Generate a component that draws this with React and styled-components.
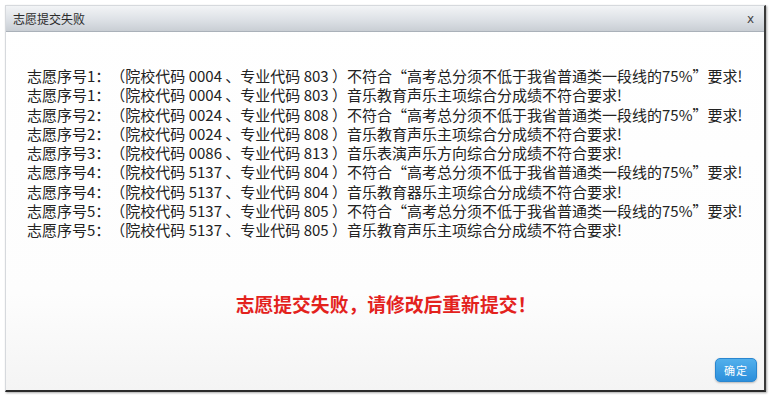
import styled, { createGlobalStyle } from "styled-components";

const GlobalStyle = createGlobalStyle`
  html, body {
    margin: 0;
    padding: 0;
    background: #ffffff;
  }
  body {
    font-family: "Noto Sans CJK SC", "Noto Sans", sans-serif;
    text-spacing-trim: space-all;
  }
`;

const Page = styled.div`
  width: 773px;
  height: 400px;
  padding: 5px 0 0 5px;
  box-sizing: border-box;
`;

const Dialog = styled.div`
  width: 761px;
  height: 387px;
  box-sizing: border-box;
  display: flex;
  flex-direction: column;
  border: 1px solid #d6d9dd;
  border-right: 2px solid #3a3a3a;
  border-bottom: 2px solid #2a2a2a;
  background: linear-gradient(to bottom, #ffffff 0%, #fdfdfd 75%, #f4f4f4 100%);
  box-shadow: 1px 1px 2px rgba(0, 0, 0, 0.35);
`;

const Header = styled.div`
  height: 25px;
  flex: none;
  display: flex;
  align-items: center;
  justify-content: space-between;
  padding: 0 10px 0 7px;
  background: linear-gradient(to bottom, #f2f4f6 0%, #dde1e6 55%, #c9ced4 100%);
  border-bottom: 1px solid #aab1b9;
`;

const Title = styled.span`
  font-size: 12px;
  color: #2a2a2a;
`;

const Close = styled.span`
  font-size: 12px;
  color: #444;
  font-family: "DejaVu Sans", sans-serif;
  line-height: 1;
`;

const Body = styled.div`
  flex: 1;
  display: flex;
  flex-direction: column;
  padding: 34px 7px 8px 21px;
`;

const Lines = styled.div`
  display: flex;
  flex-direction: column;
`;

const Line = styled.div`
  font-size: 15px;
  line-height: 19.25px;
  color: #222;
  white-space: nowrap;
`;

const Alert = styled.div`
  margin-top: 53px;
  text-align: center;
  font-size: 18.8px;
  line-height: 24px;
  font-weight: bold;
  color: #e3221d;
  padding-right: 12px;
`;

const Footer = styled.div`
  margin-top: auto;
  display: flex;
  justify-content: flex-end;
`;

const Button = styled.button`
  width: 42px;
  height: 24px;
  border: 1px solid #2a86cf;
  border-radius: 5px;
  background: linear-gradient(to bottom, #52b0ec 0%, #2c8fdb 100%);
  color: #fff;
  font-family: "Noto Sans CJK SC", sans-serif;
  font-size: 11px;
  letter-spacing: 1px;
  padding: 0;
  box-shadow: 0 1px 2px rgba(0, 0, 0, 0.25);
`;

const lines = [
  "志愿序号1：（院校代码 0004 、专业代码 803 ）不符合“高考总分须不低于我省普通类一段线的75%”要求!",
  "志愿序号1：（院校代码 0004 、专业代码 803 ）音乐教育声乐主项综合分成绩不符合要求!",
  "志愿序号2：（院校代码 0024 、专业代码 808 ）不符合“高考总分须不低于我省普通类一段线的75%”要求!",
  "志愿序号2：（院校代码 0024 、专业代码 808 ）音乐教育声乐主项综合分成绩不符合要求!",
  "志愿序号3：（院校代码 0086 、专业代码 813 ）音乐表演声乐方向综合分成绩不符合要求!",
  "志愿序号4：（院校代码 5137 、专业代码 804 ）不符合“高考总分须不低于我省普通类一段线的75%”要求!",
  "志愿序号4：（院校代码 5137 、专业代码 804 ）音乐教育器乐主项综合分成绩不符合要求!",
  "志愿序号5：（院校代码 5137 、专业代码 805 ）不符合“高考总分须不低于我省普通类一段线的75%”要求!",
  "志愿序号5：（院校代码 5137 、专业代码 805 ）音乐教育声乐主项综合分成绩不符合要求!",
];

const App = () => {
  return (
    <Page>
      <GlobalStyle />
      <Dialog>
        <Header>
          <Title>志愿提交失败</Title>
          <Close>x</Close>
        </Header>
        <Body>
          <Lines>
            {lines.map((text, i) => (
              <Line key={i}>{text}</Line>
            ))}
          </Lines>
          <Alert>志愿提交失败，请修改后重新提交！</Alert>
          <Footer>
            <Button>确定</Button>
          </Footer>
        </Body>
      </Dialog>
    </Page>
  );
};

export default App;
